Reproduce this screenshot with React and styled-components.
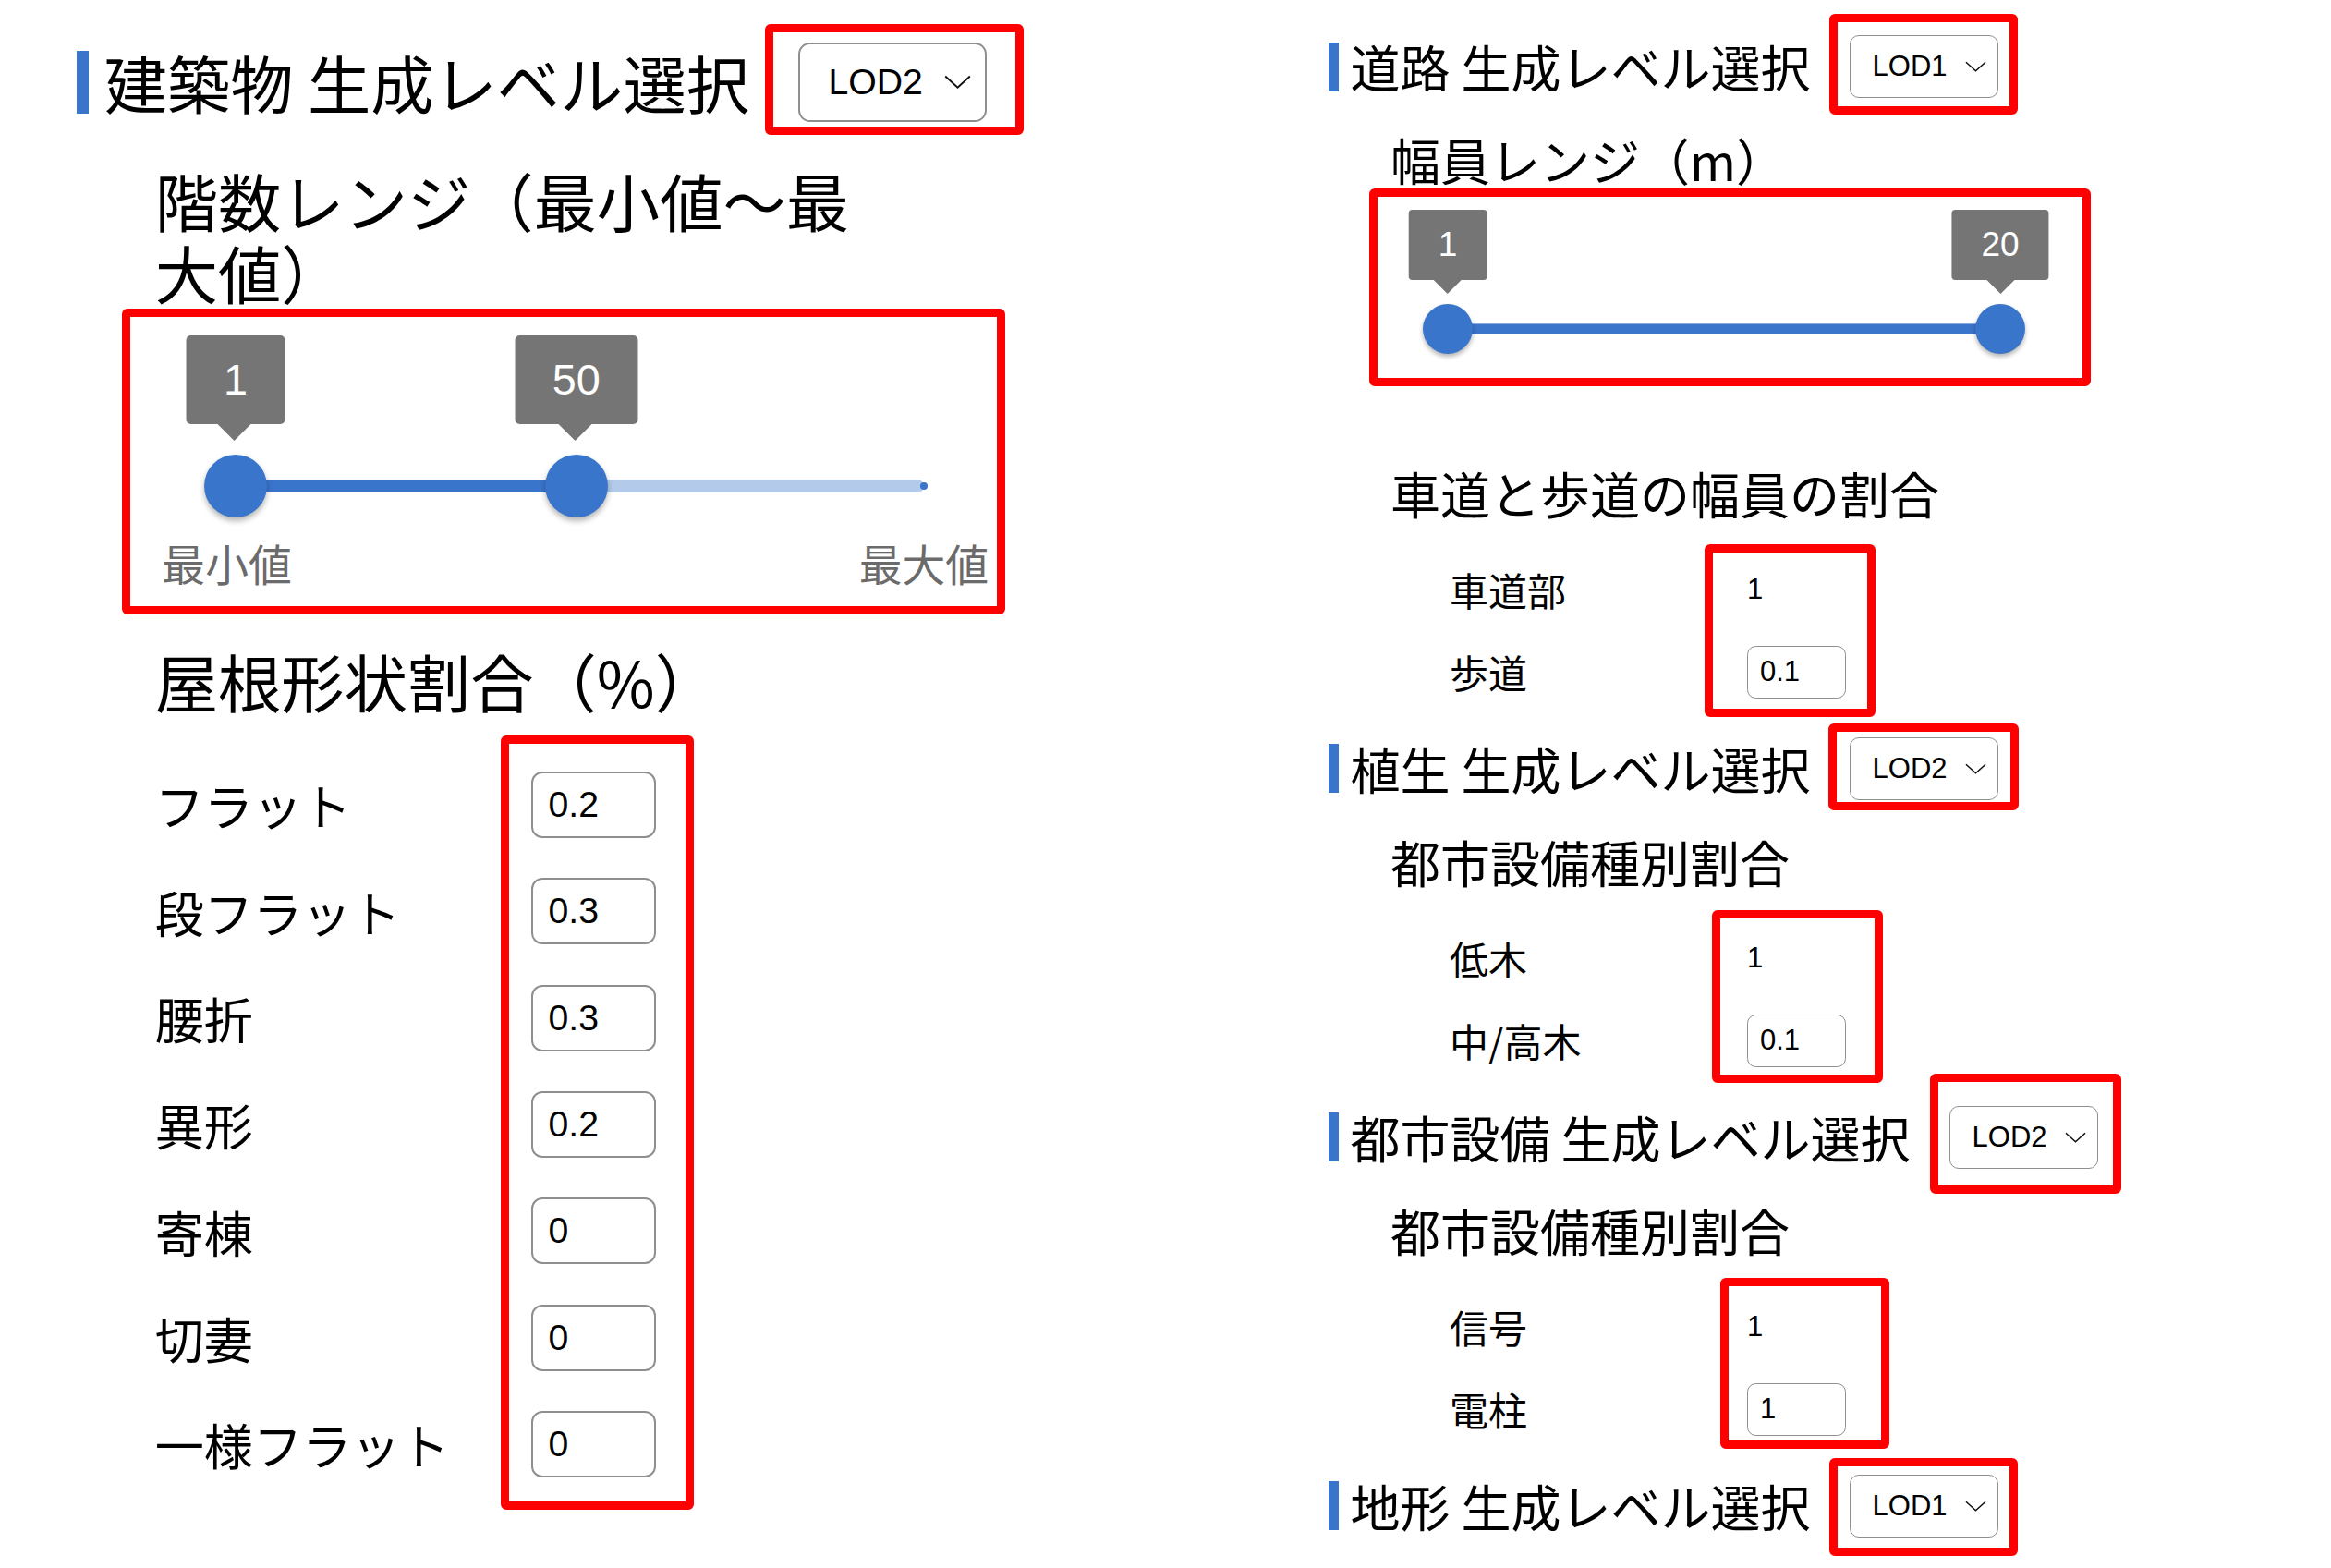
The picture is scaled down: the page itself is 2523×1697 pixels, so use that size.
import { Fragment } from "react";
import styled, { createGlobalStyle, ThemeProvider } from "styled-components";

// sizes are written for the right panel; the left panel is the same UI drawn larger (theme.s)
const u = (n) => ({ theme }) => `${+(n * theme.s).toFixed(2)}px`;
const v = (key) => (p) => `${+(p[key] * p.theme.s).toFixed(2)}px`;

const BLUE = "#3a75cc";
const JP = `"Noto Sans CJK JP", "Noto Sans", sans-serif`;
const LATIN = `"Liberation Sans", Arial, sans-serif`;

const GlobalStyle = createGlobalStyle`
  html, body {
    margin: 0;
    padding: 0;
    background: #fff;
  }
  body {
    font-family: ${JP};
    color: #000;
    overflow: hidden;
  }
`;

const Page = styled.div`
  display: grid;
  grid-template-columns: 1438px 1fr;
  width: 2523px;
  height: 1697px;
`;

const Column = styled.div`
  display: flex;
  flex-direction: column;
  align-items: flex-start;
  padding: ${(p) => p.$top}px 0 0 ${(p) => p.$left}px;
`;

const HeaderRow = styled.div`
  display: flex;
  align-items: center;
  height: ${u(68)};
  margin-top: ${v("$mt")};
`;

const Bar = styled.span`
  width: ${u(10.5)};
  height: ${u(53)};
  background: ${BLUE};
  margin-right: ${u(13)};
`;

const Title = styled.h2`
  margin: 0;
  font-size: ${u(54)};
  font-weight: 400;
  line-height: 1;
  white-space: nowrap;
`;

// red annotation frame drawn over the wrapped element
const Highlight = styled.div`
  position: relative;
  &::after {
    content: "";
    position: absolute;
    top: ${(p) => p.$box[0]}px;
    right: ${(p) => p.$box[1]}px;
    bottom: ${(p) => p.$box[2]}px;
    left: ${(p) => p.$box[3]}px;
    border: 9px solid #ff0000;
    border-radius: 6px;
    pointer-events: none;
  }
`;

const SelectSpot = styled(Highlight)`
  margin-left: ${u(42)};
`;

const Select = styled.div`
  box-sizing: border-box;
  display: flex;
  align-items: center;
  justify-content: space-between;
  width: ${u(161)};
  height: ${u(68)};
  padding: 0 ${u(12)} 0 ${u(24)};
  border: ${u(1.6)} solid #8f8f8f;
  border-radius: ${u(10)};
  font-family: ${LATIN};
  font-size: ${u(31)};
`;

const Chevron = styled.svg`
  width: ${u(23)};
  height: ${u(12)};
`;

const Subtitle = styled.h3`
  margin: ${v("$mt")} 0 0 ${u(67)};
  width: ${(p) => (p.$w ? `${p.$w * p.theme.s}px` : "auto")};
  font-size: ${u(54)};
  font-weight: 400;
  line-height: ${u(62)};
`;

const SliderBox = styled(Highlight)`
  box-sizing: border-box;
  margin-left: ${v("$ml")};
  padding: ${u(22.5)} ${v("$pr")} ${v("$pb")} ${v("$pl")};
`;

const Knobs = styled.div`
  position: relative;
  width: ${v("$w")};
  height: ${u(156)};
`;

const Rail = styled.div`
  position: absolute;
  left: 0;
  right: 0;
  top: ${u(129)};
  height: ${u(11)};
  transform: translateY(-50%);
  border-radius: ${u(5.5)};
  background: #b3caea;
`;

const Fill = styled(Rail)`
  right: auto;
  background: ${BLUE};
`;

const RailEnd = styled.div`
  position: absolute;
  left: 100%;
  top: ${u(129)};
  width: ${u(6)};
  height: ${u(6)};
  margin: ${u(-3)} 0 0 ${u(-3)};
  border-radius: 50%;
  background: ${BLUE};
`;

const Thumb = styled.div`
  position: absolute;
  top: ${u(129)};
  width: ${u(54)};
  height: ${u(54)};
  margin: ${u(-27)} 0 0 ${u(-27)};
  border-radius: 50%;
  background: ${BLUE};
  box-shadow: 0 ${u(3)} ${u(5)} rgba(0, 0, 0, 0.3);
`;

const Tip = styled.div`
  position: absolute;
  top: 0;
  height: ${u(76)};
  padding: 0 ${u(32)};
  transform: translateX(-50%);
  display: flex;
  align-items: center;
  justify-content: center;
  border-radius: ${u(4)};
  background: #757575;
  color: #fff;
  font-family: ${LATIN};
  font-size: ${u(37)};
  white-space: nowrap;
  &::after {
    content: "";
    position: absolute;
    top: 100%;
    left: 50%;
    margin-left: ${u(-15)};
    border-left: ${u(15)} solid transparent;
    border-right: ${u(15)} solid transparent;
    border-top: ${u(15)} solid #757575;
  }
`;

const ScaleLabels = styled.div`
  display: flex;
  justify-content: space-between;
  margin: ${u(16.6)} -1.5em 0;
  font-size: ${u(37)};
  line-height: 1.2;
  color: #6b6b6b;
  & > span:first-child {
    margin-left: -0.2em;
  }
`;

const Rows = styled.div`
  display: flex;
  margin: ${u(29)} 0 0 ${v("$indent")};
`;

const LabelCol = styled.div`
  display: flex;
  flex-direction: column;
  width: ${u(322)};
`;

const ValueCol = styled(Highlight)`
  display: flex;
  flex-direction: column;
  width: ${u(106.5)};
`;

const Cell = styled.div`
  display: flex;
  align-items: center;
  height: ${v("$h")};
`;

const Label = styled(Cell)`
  font-size: ${u(42)};
  line-height: 1;
  white-space: nowrap;
`;

const Value = styled(Cell)`
  font-family: ${LATIN};
  font-size: ${u(31)};
`;

const NumInput = styled.input`
  box-sizing: border-box;
  width: 100%;
  height: ${u(57)};
  margin: 0;
  padding: 0 ${u(13)};
  border: ${u(1.6)} solid #8f8f8f;
  border-radius: ${u(9.5)};
  background: #fff;
  color: #000;
  font-family: ${LATIN};
  font-size: ${u(31)};
  outline: none;
`;

function Header({ title, lod, box, mt = 0 }) {
  return (
    <HeaderRow $mt={mt}>
      <Bar />
      <Title>{title}</Title>
      <SelectSpot $box={box}>
        <Select>
          {lod}
          <Chevron viewBox="0 0 24 12">
            <polyline points="1,1 12,11 23,1" fill="none" stroke="#111" strokeWidth="1.6" />
          </Chevron>
        </Select>
      </SelectSpot>
    </HeaderRow>
  );
}

function RangeSlider({ min, max, values, track, ml, pl, pr, pb, labels }) {
  const pct = (x) => ((x - min) / (max - min)) * 100;
  const [lo, hi] = values;
  return (
    <SliderBox $box={[0, 0, 0, 0]} $ml={ml} $pl={pl} $pr={pr} $pb={pb}>
      <Knobs $w={track}>
        <Rail />
        <Fill style={{ left: `${pct(lo)}%`, width: `${pct(hi) - pct(lo)}%` }} />
        <RailEnd />
        {values.map((x, i) => (
          <Fragment key={i}>
            <Tip style={{ left: `${pct(x)}%` }}>{x}</Tip>
            <Thumb style={{ left: `${pct(x)}%` }} />
          </Fragment>
        ))}
      </Knobs>
      {labels && (
        <ScaleLabels>
          <span>{labels[0]}</span>
          <span>{labels[1]}</span>
        </ScaleLabels>
      )}
    </SliderBox>
  );
}

function RatioRows({ rows, indent, rowH, box }) {
  return (
    <Rows $indent={indent}>
      <LabelCol>
        {rows.map((r) => (
          <Label key={r.label} $h={rowH}>
            {r.label}
          </Label>
        ))}
      </LabelCol>
      <ValueCol $box={box}>
        {rows.map((r) =>
          r.input ? (
            <Cell key={r.label} $h={rowH}>
              <NumInput defaultValue={r.value} />
            </Cell>
          ) : (
            <Value key={r.label} $h={rowH}>
              {r.value}
            </Value>
          )
        )}
      </ValueCol>
    </Rows>
  );
}

const ROOF = [
  ["フラット", "0.2"],
  ["段フラット", "0.3"],
  ["腰折", "0.3"],
  ["異形", "0.2"],
  ["寄棟", "0"],
  ["切妻", "0"],
  ["一様フラット", "0"],
];

export default function App() {
  return (
    <>
      <GlobalStyle />
      <Page>
        <ThemeProvider theme={{ s: 1.265 }}>
          <Column $left={83} $top={46}>
            <Header title="建築物 生成レベル選択" lod="LOD2" box={[-20, -40, -14, -36]} />
            <Subtitle $mt={36} $w={610}>
              階数レンジ（最小値〜最大値）
            </Subtitle>
            <RangeSlider
              min={1}
              max={100}
              values={[1, 50]}
              ml={38.7}
              pl={97.2}
              track={589}
              pr={69.6}
              pb={22}
              labels={["最小値", "最大値"]}
            />
            <Subtitle $mt={26}>屋根形状割合（%）</Subtitle>
            <RatioRows
              indent={67}
              rowH={91.2}
              box={[-17, -41, -13, -33]}
              rows={ROOF.map(([label, value]) => ({ label, value, input: true }))}
            />
          </Column>
        </ThemeProvider>

        <ThemeProvider theme={{ s: 1 }}>
          <Column $left={0} $top={38}>
            <Header title="道路 生成レベル選択" lod="LOD1" box={[-23, -21, -18, -22]} />
            <Subtitle $mt={36}>幅員レンジ（m）</Subtitle>
            <RangeSlider min={1} max={20} values={[1, 20]} ml={44} pl={85} track={598} pr={98} pb={35} />
            <Subtitle $mt={85}>車道と歩道の幅員の割合</Subtitle>
            <RatioRows
              indent={131}
              rowH={89}
              box={[-5, -32, -4, -46]}
              rows={[
                { label: "車道部", value: "1" },
                { label: "歩道", value: "0.1", input: true },
              ]}
            />

            <Header mt={26} title="植生 生成レベル選択" lod="LOD2" box={[-15, -22, -11, -23]} />
            <Subtitle $mt={36}>都市設備種別割合</Subtitle>
            <RatioRows
              indent={131}
              rowH={89}
              box={[-8, -40, -1, -38]}
              rows={[
                { label: "低木", value: "1" },
                { label: "中/高木", value: "0.1", input: true },
              ]}
            />

            <Header mt={26} title="都市設備 生成レベル選択" lod="LOD2" box={[-35, -25, -27, -21]} />
            <Subtitle $mt={36}>都市設備種別割合</Subtitle>
            <RatioRows
              indent={131}
              rowH={89}
              box={[-9, -47, 2, -29]}
              rows={[
                { label: "信号", value: "1" },
                { label: "電柱", value: "1", input: true },
              ]}
            />

            <Header mt={26} title="地形 生成レベル選択" lod="LOD1" box={[-18, -21, -20, -22]} />
          </Column>
        </ThemeProvider>
      </Page>
    </>
  );
}
